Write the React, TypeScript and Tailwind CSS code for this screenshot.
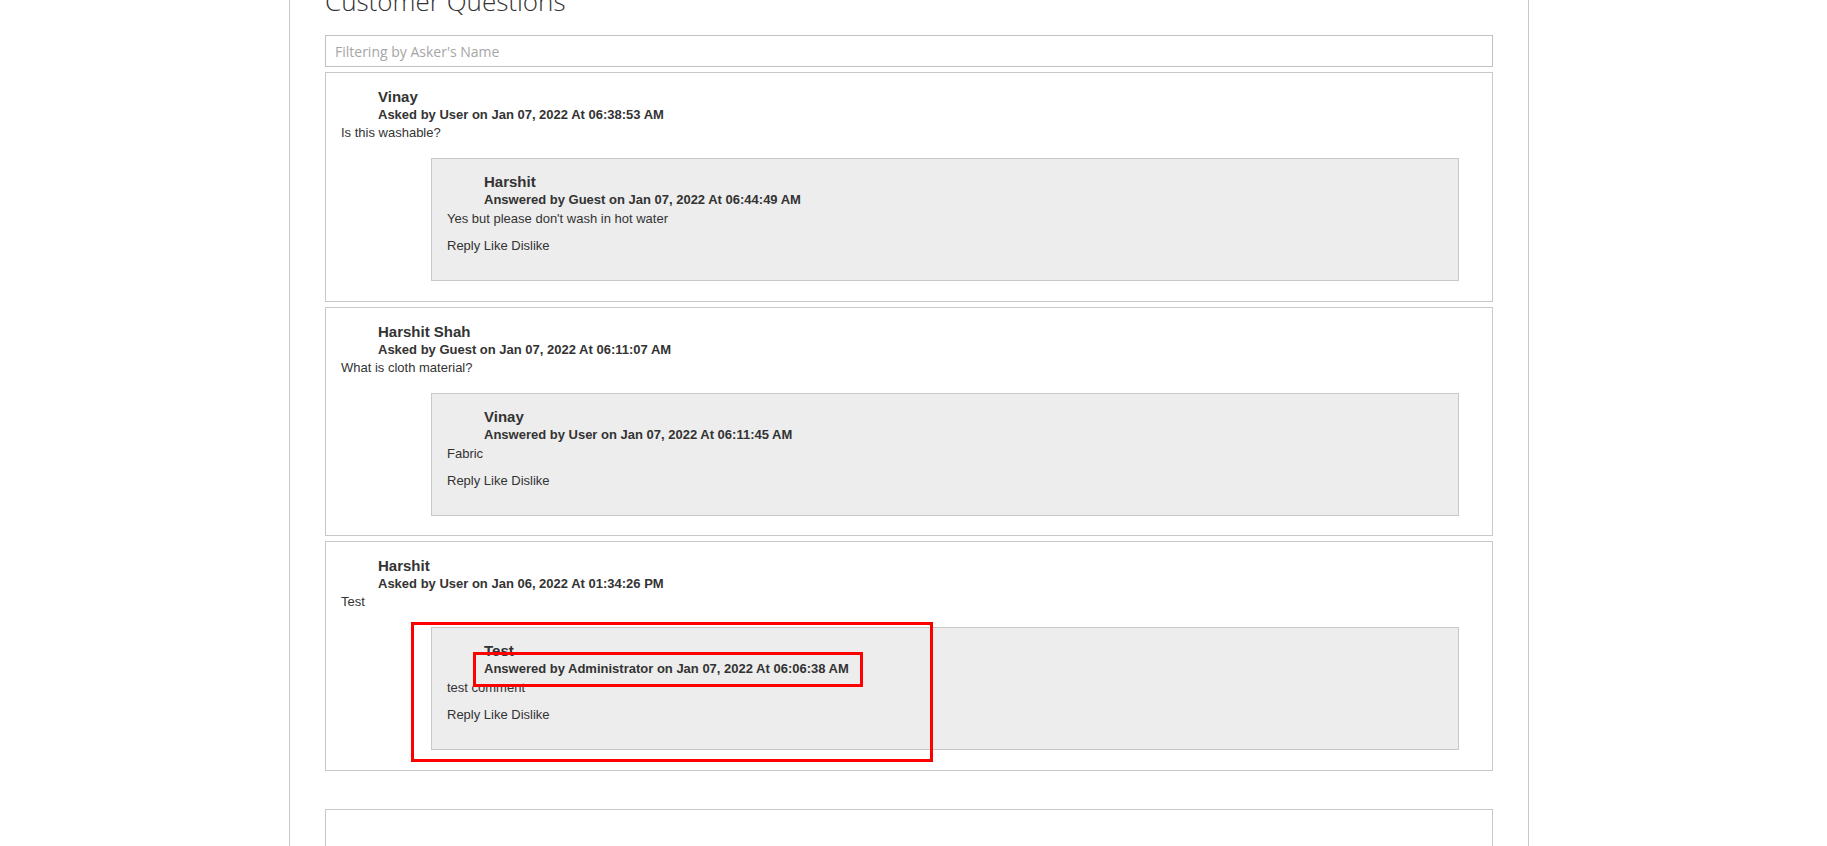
import React from "react";

type Answer = { name: string; meta: string; text: string };
type Question = { name: string; meta: string; text: string; answer: Answer; highlight?: boolean };

const questions: Question[] = [
  {
    name: "Vinay",
    meta: "Asked by User on Jan 07, 2022 At 06:38:53 AM",
    text: "Is this washable?",
    answer: {
      name: "Harshit",
      meta: "Answered by Guest on Jan 07, 2022 At 06:44:49 AM",
      text: "Yes but please don't wash in hot water",
    },
  },
  {
    name: "Harshit Shah",
    meta: "Asked by Guest on Jan 07, 2022 At 06:11:07 AM",
    text: "What is cloth material?",
    answer: {
      name: "Vinay",
      meta: "Answered by User on Jan 07, 2022 At 06:11:45 AM",
      text: "Fabric",
    },
  },
  {
    name: "Harshit",
    meta: "Asked by User on Jan 06, 2022 At 01:34:26 PM",
    text: "Test",
    highlight: true,
    answer: {
      name: "Test",
      meta: "Answered by Administrator on Jan 07, 2022 At 06:06:38 AM",
      text: "test comment",
    },
  },
];

function AnswerBox({ a }: { a: Answer }) {
  return (
    <div className="mt-[16px] ml-[90px] mr-[18px] border border-[#c8c8c8] bg-[#ededed] px-[15px] pt-[14px] pb-[25px]">
      <div className="pl-[37px]">
        <div className="text-[15px] font-bold leading-[18px]">{a.name}</div>
        <div className="text-[13px] font-bold leading-[18px]">{a.meta}</div>
      </div>
      <div className="mt-[1px] text-[13px] leading-[18px]">{a.text}</div>
      <div className="mt-[9px] text-[13px] leading-[18px]">Reply Like Dislike</div>
    </div>
  );
}

function QuestionCard({ q }: { q: Question }) {
  return (
    <div className="relative mt-[5px] border border-[#c8c8c8] bg-white px-[15px] pt-[15px] pb-[19.5px]">
      <div className="pl-[37px]">
        <div className="text-[15px] font-bold leading-[18px]">{q.name}</div>
        <div className="text-[13px] font-bold leading-[18px]">{q.meta}</div>
      </div>
      <div className="text-[13px] leading-[18px]">{q.text}</div>
      <AnswerBox a={q.answer} />
      {q.highlight && (
        <>
          <div className="pointer-events-none absolute left-[85px] top-[80px] h-[140px] w-[522px] border-[3px] border-[#ff0000]" />
          <div className="pointer-events-none absolute left-[147px] top-[110px] h-[35px] w-[390px] border-[3px] border-[#ff0000]" />
        </>
      )}
    </div>
  );
}

export default function App() {
  return (
    <div className="h-[846px] w-full overflow-hidden bg-white text-[#333333]" style={{ fontFamily: '"Liberation Sans", Arial, sans-serif' }}>
      <div className="flow-root ml-[289px] h-[846px] w-[1240px] border-x border-[#c8c8c8] px-[35px]">
        <h2
          className="-mt-[12px] text-[26px] font-light leading-[26px] text-[#333333]"
          style={{ fontFamily: '"Open Sans", sans-serif' }}
        >
          Customer Questions
        </h2>
        <input
          type="text"
          placeholder="Filtering by Asker's Name"
          className="mt-[21px] block h-[32px] w-full border border-[#c2c2c2] bg-white px-[9px] text-[14px] text-[#333333] outline-none placeholder:text-[#a6a6a6]"
          style={{ fontFamily: '"Open Sans", sans-serif' }}
        />
        {questions.map((q, i) => (
          <QuestionCard key={i} q={q} />
        ))}
        <div className="mt-[38.5px] h-[120px] border border-[#c8c8c8] bg-white" />
      </div>
    </div>
  );
}
